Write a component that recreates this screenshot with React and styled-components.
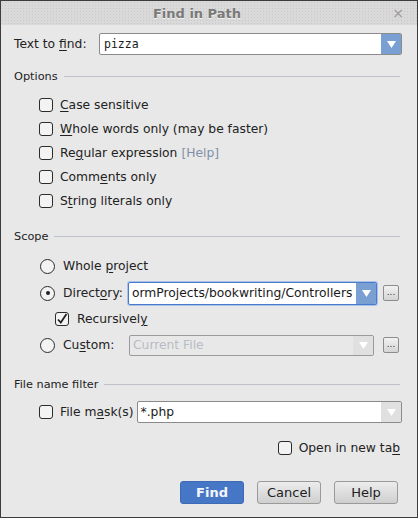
import React from 'react';
import styled, { createGlobalStyle } from 'styled-components';

const GlobalStyle = createGlobalStyle`
  body {
    margin: 0;
    background: #e8e8e8;
    font-family: "DejaVu Sans", "Liberation Sans", sans-serif;
  }
`;

const Window = styled.div`
  width: 418px;
  height: 518px;
  box-sizing: border-box;
  border: 1px solid #3c3c3c;
  background: #e8e8e8;
  display: flex;
  flex-direction: column;
  color: #222;
`;

const TitleBar = styled.div`
  height: 24px;
  flex: none;
  display: flex;
  align-items: center;
  justify-content: center;
  position: relative;
  padding-right: 24px;
  background-color: #d9d9d9;
  background-image: radial-gradient(#c9c9c9 0.8px, transparent 0.9px);
  background-size: 3px 3px;
`;

const Title = styled.span`
  font-size: 13px;
  font-weight: bold;
  color: #7a7a7a;
  text-shadow: 0 1px 0 #efefef;
`;

const CloseX = styled.span`
  position: absolute;
  right: 13px;
  top: 4px;
  font-size: 14px;
  color: #9a9a9a;
`;

const Content = styled.div`
  padding: 8px 15px 0 13px;
  display: flex;
  flex-direction: column;
`;

const Row = styled.div`
  display: flex;
  align-items: center;
  height: ${p => p.h || 24}px;
  margin-top: ${p => p.mt || 0}px;
  padding-left: ${p => p.indent || 0}px;
  justify-content: ${p => p.end ? 'flex-end' : 'flex-start'};
  padding-right: ${p => p.pr || 0}px;
  gap: ${p => p.gap || 0}px;
`;

const Label = styled.span`
  font-size: 12.3px;
  width: ${p => (p.w ? p.w + 'px' : 'auto')};
  flex: none;
  white-space: nowrap;
`;

const Mn = styled.span`
  text-decoration: underline;
  text-underline-offset: 2px;
`;

const SectionHeader = styled.div`
  display: flex;
  align-items: center;
  height: 16px;
  margin-top: ${p => p.mt}px;
  font-size: 11.3px;
  &::after {
    content: '';
    flex: 1;
    height: 1px;
    margin-left: 6px;
    margin-right: 2px;
    background: #bfc2cc;
  }
`;

const OptionList = styled.div`
  display: flex;
  flex-direction: column;
  margin-top: 9px;
  padding-left: 25px;
`;

const Option = styled.label`
  display: flex;
  align-items: center;
  gap: 7px;
  height: 24px;
  font-size: 12.3px;
`;

const Box = styled.span`
  width: 14px;
  height: 14px;
  box-sizing: border-box;
  border: 1px solid #2b2b2b;
  border-radius: 3px;
  background: #f3f3f3;
  flex: none;
  display: flex;
  align-items: center;
  justify-content: center;
`;

const RadioCircle = styled.span`
  width: 15px;
  height: 15px;
  box-sizing: border-box;
  border: 1px solid #2b2b2b;
  border-radius: 50%;
  background: #f3f3f3;
  flex: none;
  display: flex;
  align-items: center;
  justify-content: center;
  margin-right: 8px;
  &::after {
    content: '';
    width: 4px;
    height: 4px;
    border-radius: 50%;
    background: ${p => (p.checked ? '#222' : 'transparent')};
  }
`;

const CheckBox = ({ checked }) => (
  <Box>
    {checked && (
      <svg width="12" height="12" viewBox="0 0 12 12">
        <path d="M2 6.5 L4.8 9.5 L10.5 1" fill="none" stroke="#222" strokeWidth="1.8" />
      </svg>
    )}
  </Box>
);

const Combo = styled.div`
  display: flex;
  align-items: stretch;
  box-sizing: border-box;
  height: ${p => p.h || 22}px;
  width: ${p => (p.w ? p.w + 'px' : 'auto')};
  flex: ${p => (p.w ? 'none' : 1)};
  border: 1px solid ${p => (p.focus ? '#4a7bcb' : p.disabled ? '#9a9a9a' : '#8a8a8a')};
  box-shadow: ${p => (p.focus ? '0 0 0 1px #aac2ea' : 'none')};
  border-radius: 2px;
  background: ${p => (p.disabled ? '#e8e8e8' : '#fff')};
  overflow: hidden;
`;

const ComboText = styled.span`
  flex: 1;
  display: flex;
  align-items: center;
  padding-left: ${p => (p.mono ? 4 : 3)}px;
  font-family: ${p => (p.mono ? '"DejaVu Sans Mono", monospace' : '"DejaVu Sans", sans-serif')};
  font-size: ${p => (p.mono ? 11.5 : 12.3)}px;
  color: ${p => (p.disabled ? '#b8bcc4' : '#1a1a1a')};
  white-space: nowrap;
  overflow: hidden;
`;

const ArrowBtn = styled.span`
  width: 20px;
  flex: none;
  display: flex;
  align-items: center;
  justify-content: center;
  background: ${p => (p.active ? '#7a9fd2' : '#e0e0e0')};
`;

const Arrow = () => (
  <svg width="9" height="7" viewBox="0 0 9 7">
    <path d="M0 0 H9 L4.5 7 Z" fill="#fff" />
  </svg>
);

const DotsButton = styled.span`
  width: 16px;
  height: 16px;
  box-sizing: border-box;
  flex: none;
  border: 1px solid #8c8c8c;
  border-radius: 2px;
  background: linear-gradient(#f2f2f2, #d4d4d4);
  font-size: 9px;
  line-height: 12px;
  text-align: center;
  color: #333;
  margin-left: ${p => p.ml}px;
`;

const HelpLink = styled.span`
  color: #8190a8;
  margin-left: 4px;
`;

const ButtonBar = styled.div`
  display: flex;
  justify-content: flex-end;
  gap: 13px;
  padding-right: 4px;
  margin-top: 21px;
`;

const Btn = styled.button`
  width: 64px;
  height: 23px;
  box-sizing: border-box;
  border-radius: 3px;
  font-family: "DejaVu Sans", sans-serif;
  font-size: 13px;
  padding: 0;
  border: 1px solid ${p => (p.primary ? '#3f6ab5' : '#9a9a9a')};
  background: ${p => (p.primary ? '#4676c6' : 'linear-gradient(#ececec, #cfcfcf)')};
  color: ${p => (p.primary ? '#f4f6fa' : '#222')};
  font-weight: ${p => (p.primary ? 'bold' : 'normal')};
`;

const options = [
  ['', 'C', 'ase sensitive'],
  ['', 'W', 'hole words only (may be faster)'],
  ['Re', 'g', 'ular expression'],
  ['Comm', 'e', 'nts only'],
  ['S', 't', 'ring literals only'],
];

const App = () => (
  <>
    <GlobalStyle />
    <Window>
      <TitleBar>
        <Title>Find in Path</Title>
        <CloseX>×</CloseX>
      </TitleBar>
      <Content>
        <Row h={22}>
          <Label w={85}>Text to <Mn>f</Mn>ind:</Label>
          <Combo>
            <ComboText mono>pizza</ComboText>
            <ArrowBtn active><Arrow /></ArrowBtn>
          </Combo>
        </Row>

        <SectionHeader mt={13}>Options</SectionHeader>
        <OptionList>
          {options.map(([a, m, b], i) => (
            <Option key={i}>
              <CheckBox />
              <span>
                {a}<Mn>{m}</Mn>{b}
                {i === 2 && <HelpLink>[Help]</HelpLink>}
              </span>
            </Option>
          ))}
        </OptionList>

        <SectionHeader mt={15}>Scope</SectionHeader>
        <Row mt={10} indent={26}>
          <RadioCircle />
          <Label>Whole <Mn>p</Mn>roject</Label>
        </Row>
        <Row mt={3} indent={26}>
          <RadioCircle checked />
          <Label w={65}>Direct<Mn>o</Mn>ry:</Label>
          <Combo w={249} h={23} focus>
            <ComboText>ormProjects/bookwriting/Controllers</ComboText>
            <ArrowBtn active><Arrow /></ArrowBtn>
          </Combo>
          <DotsButton ml={6}>...</DotsButton>
        </Row>
        <Row mt={2} indent={41} gap={8}>
          <CheckBox checked />
          <Label>Recursivel<Mn>y</Mn></Label>
        </Row>
        <Row mt={2} indent={26}>
          <RadioCircle />
          <Label w={66}>Cu<Mn>s</Mn>tom:</Label>
          <Combo w={245} h={21} disabled>
            <ComboText disabled>Current File</ComboText>
            <ArrowBtn><Arrow /></ArrowBtn>
          </Combo>
          <DotsButton ml={9}>...</DotsButton>
        </Row>

        <SectionHeader mt={19}>File name filter</SectionHeader>
        <Row mt={8} indent={25} gap={7}>
          <CheckBox />
          <Label>File m<Mn>a</Mn>sk(s)</Label>
          <Combo h={22} style={{ marginLeft: -4 }}>
            <ComboText>*.php</ComboText>
            <ArrowBtn><Arrow /></ArrowBtn>
          </Combo>
        </Row>
        <Row mt={12} end pr={2} gap={7}>
          <CheckBox />
          <Label>Open in new ta<Mn>b</Mn></Label>
        </Row>

        <ButtonBar>
          <Btn primary>Find</Btn>
          <Btn>Cancel</Btn>
          <Btn>Help</Btn>
        </ButtonBar>
      </Content>
    </Window>
  </>
);

export default App;
